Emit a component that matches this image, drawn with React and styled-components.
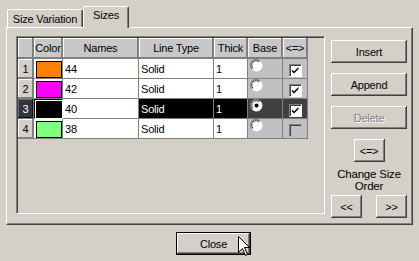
import React from "react";
import styled, { createGlobalStyle } from "styled-components";

const Global = createGlobalStyle`
  html, body {
    margin: 0;
    padding: 0;
    background: #d4d0c8;
  }
  body {
    font-family: "Liberation Sans", Arial, sans-serif;
    font-size: 11px;
    letter-spacing: -0.2px;
    color: #000;
  }
`;

const rows = [
  { id: 1, color: "#ff8000", name: "44", type: "Solid", thick: "1", base: false, order: true },
  { id: 2, color: "#ff00ff", name: "42", type: "Solid", thick: "1", base: false, order: true },
  { id: 3, color: "#000000", name: "40", type: "Solid", thick: "1", base: true, order: true, selected: true },
  { id: 4, color: "#80ff80", name: "38", type: "Solid", thick: "1", base: false, order: false },
];

function Radio({ checked }) {
  return (
    <svg width="13" height="13" viewBox="0 0 13 13">
      <circle cx="6.5" cy="6.5" r="5.5" fill="#ffffff" stroke="#ffffff" strokeWidth="1" />
      <path d="M2.2 10 A5.5 5.5 0 0 1 10 2.2" stroke="#808080" strokeWidth="1.2" fill="none" />
      <path d="M3 9.2 A4.3 4.3 0 0 1 9.2 3" stroke="#404040" strokeWidth="1" fill="none" />
      {checked && <circle cx="6.5" cy="6.5" r="2" fill="#000" />}
    </svg>
  );
}

function Check({ checked }) {
  return (
    <CheckBox $checked={checked}>
      {checked && (
        <svg width="9" height="9" viewBox="0 0 9 9">
          <path d="M1 3.5 L3 5.5 L7.5 1 L7.5 3 L3 7.5 L1 5.5 Z" fill="#000" />
        </svg>
      )}
    </CheckBox>
  );
}

function Cursor() {
  return (
    <CursorWrap>
      <svg width="13" height="21" viewBox="0 0 13 21">
        <path
          d="M0.5 0.5 L0.5 16.5 L4.5 12.5 L7.5 19.5 L9.5 18.5 L6.5 11.5 L11.5 11.5 Z"
          fill="#fff"
          stroke="#000"
          strokeWidth="1"
        />
      </svg>
    </CursorWrap>
  );
}

export default function App() {
  return (
    <Window>
      <Global />
      <TabStrip>
        <Tab>Size Variation</Tab>
        <Tab $active>Sizes</Tab>
      </TabStrip>
      <Panel>
        <Frame>
          <Grid>
            <Head />
            <Head>Color</Head>
            <Head>Names</Head>
            <Head>Line Type</Head>
            <Head>Thick</Head>
            <Head>Base</Head>
            <Head>&lt;=&gt;</Head>
            {rows.map((r) => (
              <React.Fragment key={r.id}>
                <RowHead $selected={r.selected}>{r.id}</RowHead>
                <ColorCell $selected={r.selected}>
                  <Swatch $color={r.color} $selected={r.selected} />
                </ColorCell>
                <Cell>{r.name}</Cell>
                <Cell $selected={r.selected}>{r.type}</Cell>
                <Cell $selected={r.selected}>{r.thick}</Cell>
                <RadioCell $selected={r.selected}>
                  <Radio checked={r.base} />
                </RadioCell>
                <CheckCell $selected={r.selected}>
                  <Check checked={r.order} />
                </CheckCell>
              </React.Fragment>
            ))}
          </Grid>
        </Frame>
        <Side>
          <Button>Insert</Button>
          <Button>Append</Button>
          <Button disabled>Delete</Button>
          <SmallButton>&lt;=&gt;</SmallButton>
          <Caption>
            Change Size
            <br />
            Order
          </Caption>
          <ArrowRow>
            <SmallButton>&lt;&lt;</SmallButton>
            <SmallButton>&gt;&gt;</SmallButton>
          </ArrowRow>
        </Side>
      </Panel>
      <Footer>
        <CloseButton>Close</CloseButton>
        <Cursor />
      </Footer>
    </Window>
  );
}

const Window = styled.div`
  position: relative;
  width: 419px;
  height: 261px;
  background: #d4d0c8;
  overflow: hidden;
`;

const TabStrip = styled.div`
  display: flex;
  align-items: flex-end;
  height: 27px;
  padding-left: 7px;
`;

const Tab = styled.div`
  position: relative;
  box-sizing: border-box;
  height: ${(p) => (p.$active ? "22px" : "18px")};
  width: ${(p) => (p.$active ? "46px" : "76px")};
  margin-bottom: ${(p) => (p.$active ? "-1px" : "0")};
  padding-top: ${(p) => (p.$active ? "2px" : "3px")};
  text-align: center;
  background: #d4d0c8;
  border-top: 1px solid #fff;
  border-left: 1px solid #fff;
  border-right: 1px solid #404040;
  border-radius: 2px 2px 0 0;
  box-shadow: inset -1px 0 #808080;
  z-index: ${(p) => (p.$active ? 2 : 1)};
  white-space: nowrap;
  line-height: 13px;
`;

const Panel = styled.div`
  box-sizing: border-box;
  display: flex;
  align-items: flex-start;
  margin-left: 6px;
  width: 407px;
  height: 198px;
  padding: 8px 0 0 9px;
  border-top: 1px solid #fff;
  border-left: 1px solid #fff;
  border-right: 1px solid #404040;
  border-bottom: 1px solid #404040;
  box-shadow: inset -1px -1px #808080;
`;

const Frame = styled.div`
  box-sizing: border-box;
  width: 309px;
  height: 178px;
  border-top: 1px solid #808080;
  border-left: 1px solid #808080;
  border-right: 1px solid #fff;
  border-bottom: 1px solid #fff;
  box-shadow: inset 1px 1px #404040, inset -1px -1px #d4d0c8;
  padding: 1px 0 0 1px;
`;

const Grid = styled.div`
  display: inline-grid;
  grid-template-columns: 15px 28px 75px 74px 33px 34px 24px;
  grid-template-rows: 20px repeat(4, 19px);
  gap: 1px;
  padding: 0 1px 1px 0;
  background: #808080;
`;

const Head = styled.div`
  background: #c8c8c8;
  box-shadow: inset -1px -1px #808080, inset 1px 1px #fff;
  display: flex;
  align-items: center;
  justify-content: center;
  white-space: nowrap;
  overflow: hidden;
`;

const RowHead = styled.div`
  background: ${(p) => (p.$selected ? "#30363c" : "#d4d0c8")};
  color: ${(p) => (p.$selected ? "#fff" : "#000")};
  box-shadow: ${(p) =>
    p.$selected
      ? "inset -1px -1px #101010, inset 1px 1px #707070"
      : "inset -1px -1px #808080, inset 1px 1px #fff"};
  display: flex;
  align-items: center;
  justify-content: center;
`;

const Cell = styled.div`
  background: ${(p) => (p.$selected ? "#000" : "#fff")};
  color: ${(p) => (p.$selected ? "#fff" : "#000")};
  padding-left: 2px;
  display: flex;
  align-items: center;
  white-space: nowrap;
  overflow: hidden;
`;

const ColorCell = styled.div`
  background: ${(p) => (p.$selected ? "#000" : "#fff")};
  display: flex;
  align-items: flex-start;
  padding: 1px 0 0 1px;
`;

const Swatch = styled.div`
  box-sizing: border-box;
  width: 26px;
  height: 17px;
  background: ${(p) => p.$color};
  border: 1px solid #000;
  box-shadow: ${(p) => (p.$selected ? "0 0 0 1px #fff" : "none")};
  margin: 1px 0 0 1px;
`;

const RadioCell = styled.div`
  background: ${(p) => (p.$selected ? "#404040" : "#c0c0c0")};
  overflow: hidden;
  padding: 0 0 0 2px;
  display: flex;
  align-items: flex-start;
  svg {
    flex-shrink: 0;
    margin-top: 0;
  }
`;

const CheckCell = styled.div`
  background: ${(p) => (p.$selected ? "#404040" : "#c0c0c0")};
  display: flex;
  align-items: center;
  justify-content: center;
  padding-top: 3px;
`;

const CheckBox = styled.div`
  box-sizing: border-box;
  width: 13px;
  height: 13px;
  background: ${(p) => (p.$checked ? "#fff" : "#c0c0c0")};
  border-top: 1px solid #808080;
  border-left: 1px solid #808080;
  border-right: 1px solid ${(p) => (p.$checked ? "#fff" : "#c0c0c0")};
  border-bottom: 1px solid ${(p) => (p.$checked ? "#fff" : "#c0c0c0")};
  box-shadow: inset 1px 1px #404040;
  display: flex;
  align-items: center;
  justify-content: center;
  padding: 1px 0 0 1px;
`;

const Side = styled.div`
  display: flex;
  flex-direction: column;
  align-items: center;
  width: 76px;
  margin: 4px 0 0 6px;
`;

const Button = styled.button`
  box-sizing: border-box;
  width: 76px;
  height: 23px;
  margin-bottom: 10px;
  padding: 0;
  border: none;
  background: #d4d0c8;
  font-family: "Liberation Sans", Arial, sans-serif;
  font-size: 11px;
  letter-spacing: -0.2px;
  color: #000;
  box-shadow: inset -1px -1px #404040, inset 1px 1px #fff, inset -2px -2px #808080;

  &:disabled {
    color: #808080;
    text-shadow: 1px 1px #fff;
  }
`;

const SmallButton = styled(Button)`
  width: 31px;
  margin: 0;
`;

const Caption = styled.div`
  text-align: center;
  line-height: 12px;
  margin: 6px 0 3px;
  font-size: 11.5px;
`;

const ArrowRow = styled.div`
  display: flex;
  justify-content: space-between;
  width: 76px;
`;

const Footer = styled.div`
  position: relative;
  padding: 7px 0 0 176px;
`;

const CloseButton = styled(Button)`
  width: 75px;
  height: 23px;
  margin: 0;
  box-shadow: 0 0 0 1px #000 inset, inset -2px -2px #404040, inset 2px 2px #fff,
    inset -3px -3px #808080;
`;

const CursorWrap = styled.div`
  position: absolute;
  left: 238px;
  top: 11px;
  line-height: 0;
`;
